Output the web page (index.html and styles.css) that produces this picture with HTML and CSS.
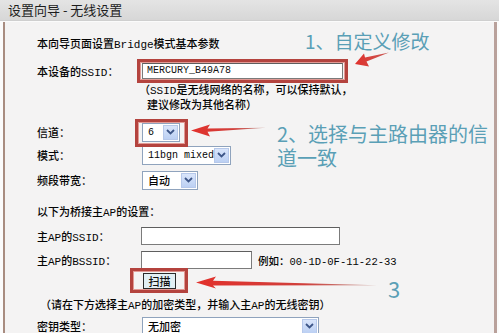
FILE: index.html
```html
<!DOCTYPE html>
<html lang="zh-CN">
<head>
    <meta charset="UTF-8">
    <meta name="viewport" content="width=device-width, initial-scale=1.0">
    <title>设置向导 - 无线设置</title>
    <link rel="stylesheet" href="styles.css">
</head>
<body>
<div class="page">

    <div class="header">设置向导 - 无线设置</div>

    <div class="panel">
        <div class="row r-intro">本向导页面设置Bridge模式基本参数</div>

        <div class="row r-ssid">
            <span class="label">本设备的SSID：</span>
            <input class="text ssid" type="text" value="MERCURY_B49A78">
        </div>
        <div class="row r-note1"><span class="note">（SSID是无线网络的名称，可以保持默认，</span></div>
        <div class="row r-note2"><span class="note2">建议修改为其他名称）</span></div>

        <div class="row r-channel">
            <span class="label">信道：</span>
            <div class="select w-channel"><span class="val">6</span><span class="drop"><svg width="9" height="6" viewBox="0 0 9 6"><path d="M1 1 L4.5 4.5 L8 1" fill="none" stroke="#3d5688" stroke-width="1.8"/></svg></span></div>
        </div>
        <div class="row r-mode">
            <span class="label">模式：</span>
            <div class="select w-mode"><span class="val">11bgn mixed</span><span class="drop"><svg width="9" height="6" viewBox="0 0 9 6"><path d="M1 1 L4.5 4.5 L8 1" fill="none" stroke="#3d5688" stroke-width="1.8"/></svg></span></div>
        </div>
        <div class="row r-bw">
            <span class="label">频段带宽：</span>
            <div class="select w-bw"><span class="val cjk">自动</span><span class="drop"><svg width="9" height="6" viewBox="0 0 9 6"><path d="M1 1 L4.5 4.5 L8 1" fill="none" stroke="#3d5688" stroke-width="1.8"/></svg></span></div>
        </div>

        <div class="row r-bridge">以下为桥接主AP的设置：</div>

        <div class="row r-apssid">
            <span class="label">主AP的SSID：</span>
            <input class="text apssid" type="text" value="">
        </div>
        <div class="row r-apbssid">
            <span class="label">主AP的BSSID：</span>
            <input class="text apbssid" type="text" value="">
            <span class="example">例如：00-1D-0F-11-22-33</span>
        </div>
        <div class="row r-scan">
            <button class="scan">扫描</button>
        </div>

        <div class="row r-note3">（请在下方选择主AP的加密类型，并输入主AP的无线密钥）</div>

        <div class="row r-key">
            <span class="label">密钥类型：</span>
            <div class="select w-key"><span class="val cjk">无加密</span><span class="drop"><svg width="9" height="6" viewBox="0 0 9 6"><path d="M1 1 L4.5 4.5 L8 1" fill="none" stroke="#3d5688" stroke-width="1.8"/></svg></span></div>
        </div>
    </div>

    <!-- annotations drawn on top of the screenshot -->
    <div class="mark mark-ssid"></div>
    <div class="mark mark-channel"></div>
    <div class="mark mark-scan"></div>

    <svg class="arrows" width="499" height="333" viewBox="0 0 499 333">
        <defs>
            <linearGradient id="fade1" x1="0" y1="0" x2="1" y2="0">
                <stop offset="0" stop-color="#e0302b"/>
                <stop offset="1" stop-color="#c85a55"/>
            </linearGradient>
            <linearGradient id="fade2" x1="0" y1="0" x2="1" y2="0">
                <stop offset="0" stop-color="#e2302b"/>
                <stop offset="0.6" stop-color="#d0403c"/>
                <stop offset="1" stop-color="#a85a50" stop-opacity="0.6"/>
            </linearGradient>
        </defs>
        <path d="M355 64 L369 66.5 L366.5 61.5 L389 52.5 L365 57.5 L364 53.5 Z" fill="url(#fade1)"/>
        <path d="M191 130.5 L210 124.5 L207.5 128.6 L266 127.8 L207.5 131.8 L210 136.5 Z" fill="url(#fade2)"/>
        <path d="M196 282.5 L216 276.5 L213 280.8 L377 285.3 L213 285.6 L216 288.5 Z" fill="url(#fade2)"/>
    </svg>

    <div class="tip tip-1">1、自定义修改</div>
    <div class="tip tip-2a">2、选择与主路由器的信</div>
    <div class="tip tip-2b">道一致</div>
    <div class="tip tip-3">3</div>

</div>
</body>
</html>
```

FILE: styles.css
```css
body {
    margin: 0;
    padding: 0;
    background-color: #fbfbfb;
    font-family: "Liberation Mono", "Noto Sans CJK SC", monospace;
    font-size: 11px;
    font-weight: 500;
    color: #050505;
}
.page {
    position: relative;
    width: 499px;
    height: 333px;
    overflow: hidden;
}
.header {
    height: 20px;
    line-height: 20px;
    padding-left: 8px;
    font-family: "Noto Sans CJK SC", sans-serif;
    font-size: 13px;
    font-weight: 400;
    color: #1d1d1d;
    background: linear-gradient(#e4e4e4, #d7d7d7);
    border-bottom: 1px solid #cfcfcf;
}
.panel {
    margin: 1px 0 0 3px;
    width: 494px;
    height: 320px;
    padding: 11px 0 0 32px;
    box-sizing: border-box;
    background-color: #f4f3f3;
    border-left: 2px solid #a88c80;
    border-right: 3px solid #b9a19b;
    display: flex;
    flex-direction: column;
}
.row {
    display: flex;
    align-items: center;
    height: 20px;
    white-space: nowrap;
}
.label {
    width: 104px;
    flex: none;
}

/* row spacing, taken from the screenshot */
.r-ssid { margin-top: 7px; height: 21px; }
.r-note1 { height: 15px; }
.r-note2 { height: 16px; }
.r-channel { margin-top: 10px; }
.r-mode { margin-top: 3px; }
.r-bw { margin-top: 5px; }
.r-bridge { margin-top: 11px; }
.r-apssid { margin-top: 5px; }
.r-apbssid { margin-top: 4px; }
.r-scan { margin-top: 1px; height: 19px; }
.r-note3 { margin-top: 5px; height: 18px; padding-left: 3px; }
.r-key { margin-top: 3px; }

.note { margin-left: 102px; }
.note2 { margin-left: 110px; }

input.text {
    box-sizing: border-box;
    height: 18px;
    margin: 0;
    padding: 0 4px;
    border: 1px solid #7b7b7b;
    border-top-color: #5e5e5e;
    background: #fff;
    font-family: "Liberation Mono", monospace;
    font-size: 10px;
    color: #111;
    outline: none;
}
input.ssid { width: 201px; height: 16px; margin-left: 1px; }
input.apssid { width: 199px; }
input.apbssid { width: 111px; }
.example { margin-left: 6px; font-size: 10.5px; }

.select {
    box-sizing: border-box;
    height: 19px;
    margin-left: 1px;
    display: flex;
    align-items: center;
    justify-content: space-between;
    background: #fff;
    border: 1px solid #8fa3bd;
    padding: 1px;
    font-family: "Liberation Mono", monospace;
    font-size: 10px;
}
.select .val { padding-left: 4px; }
.select .cjk { font-family: "Noto Sans CJK SC", sans-serif; font-size: 11px; }
.select .drop {
    width: 15px;
    height: 15px;
    display: flex;
    align-items: center;
    justify-content: center;
    background: linear-gradient(#d9e5fb, #bcd0f3);
    border: 1px solid #b6c8ea;
    box-sizing: border-box;
}
.w-channel { width: 38px; }
.w-mode { width: 89px; }
.w-bw { width: 56px; }
.w-key { width: 177px; }

.scan {
    margin-left: 106px;
    width: 33px;
    height: 16px;
    padding: 0;
    border: 1px solid #2b2b2b;
    background: #e2eff4;
    font-family: "Noto Sans CJK SC", sans-serif;
    font-size: 11px;
    font-weight: 500;
    line-height: 14px;
    color: #111;
}

.mark {
    position: absolute;
    box-sizing: border-box;
    border: 3px solid #b4433e;
    box-shadow: inset 0 0 0 1px #e29a95;
}
.mark-ssid { left: 137px; top: 59px; width: 211px; height: 24px; }
.mark-channel { left: 135px; top: 119px; width: 53px; height: 28px; }
.mark-scan { left: 130px; top: 268px; width: 58px; height: 25px; }

.arrows {
    position: absolute;
    left: 0;
    top: 0;
    pointer-events: none;
}

.tip {
    position: absolute;
    font-family: "Noto Sans CJK SC", sans-serif;
    font-size: 20px;
    font-weight: 400;
    line-height: 22px;
    color: #5a9fb6;
    white-space: nowrap;
}
.tip-1 { left: 305px; top: 30px; font-size: 19px; }
.tip-2a { left: 277px; top: 123px; }
.tip-2b { left: 277px; top: 147px; }
.tip-3 { left: 388px; top: 277px; font-size: 22px; }
```
